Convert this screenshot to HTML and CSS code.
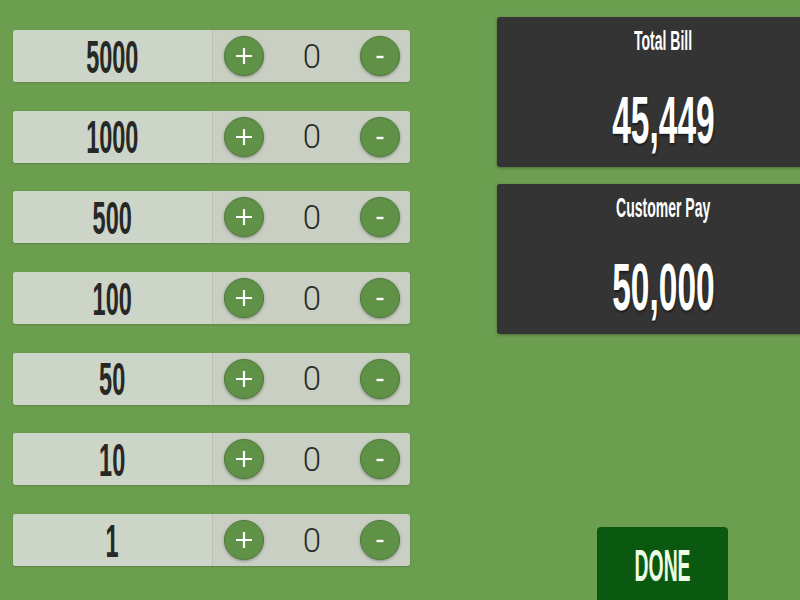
FILE: index.html
```html
<!DOCTYPE html>
<html lang="en">
<head>
    <meta charset="UTF-8" />
    <meta name="viewport" content="width=device-width, initial-scale=1.0" />
    <title>Cash Counter</title>
    <link rel="stylesheet" href="styles.css">
</head>
<body>

    <div class="page">
        <div class="denoms" id="denoms"></div>

        <div class="summary">
            <div class="panel">
                <div class="panel-title"><span class="squeeze">Total Bill</span></div>
                <div class="panel-value"><span class="squeeze" id="totalBill">45,449</span></div>
            </div>
            <div class="panel">
                <div class="panel-title"><span class="squeeze">Customer Pay</span></div>
                <div class="panel-value"><span class="squeeze" id="customerPay">50,000</span></div>
            </div>
            <button class="done"><span class="squeeze">DONE</span></button>
        </div>
    </div>

    <script>
        const notes = [5000, 1000, 500, 100, 50, 10, 1];
        const counts = {};
        const list = document.getElementById("denoms");

        const plusIcon = '<svg width="20" height="20" viewBox="0 0 20 20"><path d="M10 2v16M2 10h16" stroke="#fff" stroke-width="2.2" fill="none"/></svg>';
        const minusIcon = '<svg width="20" height="20" viewBox="0 0 20 20"><path d="M6.5 11h7" stroke="#fff" stroke-width="2.4" fill="none"/></svg>';

        notes.forEach(note => {
            counts[note] = 0;
            const row = document.createElement("div");
            row.className = "row";
            row.innerHTML = `
                <div class="note"><span class="squeeze">${note}</span></div>
                <div class="counter">
                    <button class="circle" data-note="${note}" data-step="1">${plusIcon}</button>
                    <span class="count" id="count-${note}">0</span>
                    <button class="circle" data-note="${note}" data-step="-1">${minusIcon}</button>
                </div>
            `;
            list.appendChild(row);
        });

        list.addEventListener("click", e => {
            const btn = e.target.closest(".circle");
            if (!btn) return;
            const note = btn.dataset.note;
            counts[note] = Math.max(0, counts[note] + parseInt(btn.dataset.step));
            document.getElementById("count-" + note).textContent = counts[note];
            updatePay();
        });

        function updatePay() {
            let total = 0;
            notes.forEach(n => total += n * counts[n]);
            document.getElementById("customerPay").textContent = total === 0 ? "50,000" : total.toLocaleString("en-US");
        }
    </script>

</body>
</html>
```

FILE: styles.css
```css
html, body {
    height: 600px;
    overflow: hidden;
}

body {
    margin: 0;
    background-color: #6b9e4f;
    font-family: "Liberation Sans", Arial, sans-serif;
}

.page {
    display: flex;
    padding: 17px 0 0 13px;
}

.squeeze {
    display: inline-block;
    transform: scaleX(0.5);
    white-space: nowrap;
}

.denoms {
    flex-shrink: 0;
    width: 397px;
    margin-top: 13px;
    display: flex;
    flex-direction: column;
    gap: 28.7px;
}

.row {
    display: flex;
    height: 52px;
    border-radius: 3px;
    background-color: #c9d0c3;
    box-shadow: 0 1px 2px rgba(0,0,0,0.15);
}

.note {
    width: 199px;
    display: flex;
    align-items: center;
    justify-content: center;
    font-size: 47px;
    font-weight: bold;
    color: #262826;
    background-color: #cdd4c8;
    border-radius: 3px 0 0 3px;
    border-right: 1px solid #b9c1b3;
}

.counter {
    flex: 1;
    display: flex;
    align-items: center;
    justify-content: space-between;
    padding: 0 10px 0 11px;
}

.circle {
    width: 40px;
    height: 40px;
    padding: 0;
    border-radius: 50%;
    border: 1px solid #4d7c39;
    background-color: #5f9147;
    box-shadow: 0 1px 3px rgba(0,0,0,0.35);
    display: flex;
    align-items: center;
    justify-content: center;
    cursor: pointer;
}

.count {
    font-family: Roboto, "Liberation Sans", sans-serif;
    font-weight: 300;
    font-size: 33px;
    color: #2b2b2b;
}

.summary {
    flex-shrink: 0;
    width: 332px;
    margin-left: 87px;
    display: flex;
    flex-direction: column;
    gap: 17px;
}

.panel {
    height: 150px;
    background-color: #343434;
    border-radius: 3px;
    box-shadow: 0 1px 3px rgba(0,0,0,0.3);
    color: #fff;
    text-align: center;
}

.panel-title {
    padding-top: 10px;
    font-size: 28px;
    line-height: 28px;
    font-weight: bold;
}

.panel-value {
    margin-top: 31px;
    font-size: 67px;
    line-height: 67px;
    font-weight: bold;
    text-shadow: 1px 2px 3px rgba(0,0,0,0.5);
}

.done {
    width: 131px;
    height: 80px;
    margin: 176px 0 0 100px;
    padding: 15px 0 0;
    display: flex;
    align-items: flex-start;
    justify-content: center;
    border: none;
    border-radius: 4px;
    background-color: #0b5910;
    color: #eefde6;
    font-family: "Liberation Sans", Arial, sans-serif;
    font-size: 44px;
    line-height: 47px;
    font-weight: bold;
    align-self: flex-start;
    cursor: pointer;
}

.done .squeeze {
    transform: scaleX(0.44);
}
```
